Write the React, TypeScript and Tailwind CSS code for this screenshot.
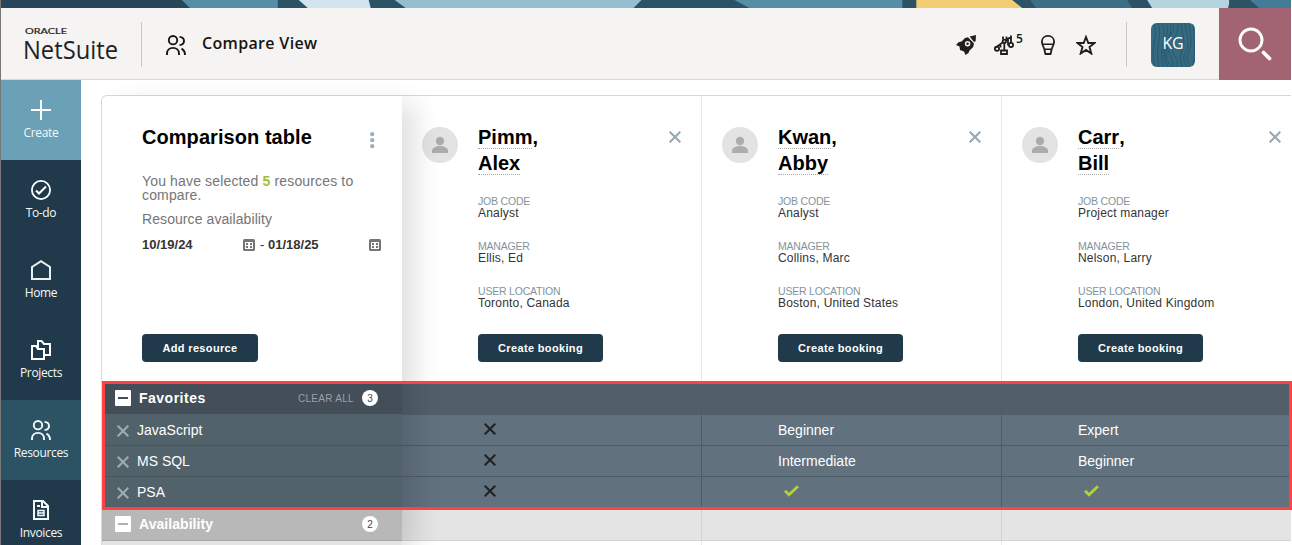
import React from 'react';

interface IconProps {
  className?: string;
}

interface Resource {
  last: string;
  first: string;
  jobCode: string;
  manager: string;
  location: string;
  skills: string[];
}

const resources: Resource[] = [
  { last: 'Pimm', first: 'Alex', jobCode: 'Analyst', manager: 'Ellis, Ed', location: 'Toronto, Canada', skills: ['no', 'no', 'no'] },
  { last: 'Kwan', first: 'Abby', jobCode: 'Analyst', manager: 'Collins, Marc', location: 'Boston, United States', skills: ['Beginner', 'Intermediate', 'yes'] },
  { last: 'Carr', first: 'Bill', jobCode: 'Project manager', manager: 'Nelson, Larry', location: 'London, United Kingdom', skills: ['Expert', 'Beginner', 'yes'] },
];

const PeopleIcon: React.FC<IconProps> = ({ className }) => (
  <svg className={className} width="20" height="20" viewBox="0 0 20 20" fill="none" stroke="currentColor" strokeWidth="1.9">
    <circle cx="7" cy="5.200" r="4.200" />
    <path d="M1 20v-1.500C1 15 3.500 12.900 7 12.900s6 2.100 6 5.600V20" />
    <path d="M13.500 1.900c2.700.3 4.500 1.700 4.500 4s-1.800 3.900-4.500 4.200M15.500 13.700c2.200 1.200 3.500 3.300 3.500 6.300" />
  </svg>
);

const CrossIcon: React.FC<IconProps> = ({ className }) => (
  <svg className={className} width="12" height="12" viewBox="0 0 12 12" stroke="currentColor" strokeWidth="2.100">
    <path d="M.7.7l10.600 10.600M11.300.7L.7 11.300" />
  </svg>
);

const CheckIcon = () => (
  <svg className="-mt-0.5 ml-1.5" width="15" height="12" viewBox="0 0 15 12" fill="none" stroke="#b2d235" strokeWidth="2.800">
    <path d="M1 5.800l4 4L14 1.200" />
  </svg>
);

const CalendarIcon = () => (
  <svg width="12" height="12" viewBox="0 0 12 12">
    <rect width="12" height="12" rx="1.500" fill="#757575" />
    <path d="M2 3h8v7H2z" fill="#fff" />
    <path d="M3 4h2v2H3zM7 4h2v2H7zM3 7h2v2H3zM7 7h2v2H7z" fill="#757575" />
  </svg>
);

const MinusBox = ({ color }: { color: string }) => (
  <svg width="16" height="16" viewBox="0 0 16 16">
    <rect width="16" height="16" rx="1" fill="#fff" />
    <path d="M3 8h10" stroke={color} strokeWidth="2" />
  </svg>
);

const navItems = [
  {
    label: 'Create',
    bg: 'bg-[#6aa1b7]',
    icon: <svg width="20" height="20" stroke="#fff" strokeWidth="2"><path d="M10 0v20M0 10h20" /></svg>,
  },
  {
    label: 'To-do',
    bg: 'bg-[#203a4b]',
    icon: (
      <svg width="20" height="20" fill="none" stroke="#fff" strokeWidth="1.800">
        <circle cx="10" cy="10" r="9.100" />
        <path d="M5 10.500l3 3 7-7" strokeWidth="2.100" />
      </svg>
    ),
  },
  {
    label: 'Home',
    bg: 'bg-[#203a4b]',
    icon: <svg width="20" height="20" fill="none" stroke="#e9f3f3" strokeWidth="2"><path d="M1 19V7l9-5.800L19 7v12z" /></svg>,
  },
  {
    label: 'Projects',
    bg: 'bg-[#203a4b]',
    icon: (
      <svg width="20" height="20" fill="none" stroke="#fff" strokeWidth="2">
        <path d="M1 6h4l2 3h6v10H1z" />
        <path d="M7 9V1h3.500l2.500 3h6v11h-6" />
      </svg>
    ),
  },
  { label: 'Resources', bg: 'bg-[#2c5364]', icon: <PeopleIcon className="text-[#f4fafa]" /> },
  {
    label: 'Invoices',
    bg: 'bg-[#203a4b]',
    icon: (
      <svg width="20" height="20" fill="none" stroke="#f4fafa" strokeWidth="2">
        <path d="M3 1h9l5 5v13H3z" />
        <path d="M11 1v6h6M6 6h3" />
        <path d="M7 10.500h6v5H7zM7 13h6" strokeWidth="1.500" />
      </svg>
    ),
  },
];

const Banner = () => (
  <svg className="block h-2 w-full" viewBox="0 0 1291 8" preserveAspectRatio="none">
    <rect width="1291" height="8" fill="#2b5365" />
    <rect width="190" height="8" fill="#28475b" />
    <path d="M181 0h96v8h-88z" fill="#568ea6" />
    <path d="M298 0h70l2 8h-63z" fill="#d0e5ee" />
    <path d="M394 0h247l-8 8H405z" fill="#95bfcf" />
    <path d="M734 0h168v8H749z" fill="#568ea6" />
    <path d="M916 0h96l10 8H916z" fill="#f4cc73" />
    <path d="M1030 0h97l5 8h-96z" fill="#3d6e85" />
    <path d="M1147 0h82v4l-1 4h-76z" fill="#b5d4e0" />
    <path d="M1250 0h41v8h-32z" fill="#437c97" />
  </svg>
);

const Header = () => (
  <header className="flex h-18 border-b border-[#d9d8d6] bg-[#f5f4f2] font-['Open_Sans',sans-serif] text-[#161513]">
    <svg className="mt-4 ml-5 shrink-0" width="110" height="44" fill="#222">
      <text x="4" y="10.200" fontSize="7.500" textLength="42" lengthAdjust="spacingAndGlyphs" fontFamily="Lato, sans-serif" stroke="#222" strokeWidth="0.200">ORACLE</text>
      <text x="2" y="35" fontSize="25.500" textLength="95" lengthAdjust="spacingAndGlyphs" fontFamily="'Open Sans', sans-serif">NetSuite</text>
    </svg>
    <div className="mt-3.5 ml-2.5 h-[45px] w-px bg-[#c9c8c6]" />
    <PeopleIcon className="mt-[27px] ml-6" />
    <h1 className="mt-[23px] ml-4 text-base leading-6 font-semibold tracking-[0.33px]">Compare View</h1>

    <div className="ml-auto flex">
      <svg className="mt-[27px]" width="21" height="20" viewBox="0 0 21 20" fill="#1f1e1c">
        <path d="M12 2.300l6 6.200-.8 3.500-3.700 3.500-1 2.500-3 2-1.500-3.500L4 15l-.5-3.500L0 10l2.500-2.700 3-.8L9 3z" />
        <path d="M13.700 1.400L20 0l-.4 6.300-1.600.7z" />
        <circle cx="11.600" cy="8.700" r="2" fill="none" stroke="#f5f4f2" strokeWidth="1.500" />
      </svg>
      <svg className="mt-[27px] ml-[17px]" width="21" height="20" viewBox="0 0 21 20" fill="none" stroke="#1f1e1c" strokeWidth="1.800">
        <circle cx="3" cy="13.700" r="2.100" />
        <circle cx="17" cy="9.900" r="2.100" />
        <circle cx="10.300" cy="6.300" r="1.700" />
        <path d="M7 15.500h6V19H7zM10.300 8v7.500M9 7.300L1 13M11.700 5.300L17 2M17 .5V8M12.500 1.500v3M14 4.500v6M6.500 9v3.500M9 4.500V1.500" />
      </svg>
      <span className="mt-[23px] ml-px w-2.5 text-[12px] leading-4 font-semibold">5</span>
      <svg className="mt-[27px] mr-px ml-[15px]" width="14" height="20" viewBox="0 0 14 20" fill="none" stroke="#1f1e1c" strokeWidth="1.800">
        <path d="M3.300 14.300C3 12 .9 10.500.9 6.800.9 3.300 3.500.9 7 .9s6.100 2.400 6.100 5.900c0 3.700-2.100 5.200-2.400 7.500L9.500 19h-5z" />
        <path d="M2 9.200h10M3.300 14.300h7.400" strokeWidth="1.400" />
      </svg>
      <svg className="mt-[27px] ml-5" width="20" height="20" viewBox="0 0 20 20" fill="none" stroke="#1f1e1c" strokeWidth="1.900">
        <path d="M10 2l2.300 6h6.100l-4.900 4 1.800 6.500L10 15l-5.300 3.500L6.500 12 1.600 8h6.100z" />
      </svg>
      <div className="mt-3.5 ml-[30px] h-[45px] w-px bg-[#c9c8c6]" />
      <div className="relative mt-[15px] ml-6 flex size-11 items-center justify-center overflow-hidden rounded-md bg-[#356a80] text-base text-white">
        <svg className="absolute inset-0" width="44" height="44" fill="none" stroke="#2b596d">
          <path d="M3 0c5 14-5 24 1 44M7 0c5 13-4 25 1 44M11 0c6 16-5 25 2 44M15 0c6 12-9 24 2 44M19 0c5 12-13 28 2 44M22 0c4 10-10 15-5 27s4 12 6 17M26 0c4 11-5 13-5 23s7 13 5 21M30 0c1 12 5 17 1 27s0 12 0 17M34 0c1 12 6 18 1 28s0 11 0 16M38 0c1 12 4 18 0 28s0 11 1 16M42 0c1 14 3 25 0 44" />
        </svg>
        <span className="relative -mt-1 tracking-[-0.3px]">KG</span>
      </div>
      <div className="ml-6 h-18 w-[72px] bg-[#a26372]">
        <svg width="72" height="72" fill="none" stroke="#fff" strokeLinecap="round">
          <circle cx="32" cy="32" r="11" strokeWidth="2.900" />
          <path d="M44.500 44.500l6 6" strokeWidth="3.800" />
        </svg>
      </div>
    </div>
  </header>
);

const Sidebar = () => (
  <nav className="w-20 shrink-0 font-['Open_Sans',sans-serif]">
    {navItems.map((item) => (
      <div key={item.label} className={`flex h-20 flex-col items-center pt-5 ${item.bg}`}>
        {item.icon}
        <span className="mt-1 text-[12px] leading-[18px] tracking-[-0.35px] text-[#f4f8f8]">{item.label}</span>
      </div>
    ))}
  </nav>
);

const DarkButton = ({ label, width }: { label: string; width: string }) => (
  <button className={`block h-7 rounded bg-[#203a4b] text-[11px] font-bold tracking-[0.35px] text-white ${width}`}>{label}</button>
);

const SummaryColumn = () => (
  <div className="relative z-10 w-[300px] shrink-0 rounded-tl-md bg-white shadow-[14px_8px_26px_rgba(0,0,0,0.12)]">
    <div className="flex h-72 flex-col items-start pl-10">
      <div className="mt-7 flex h-[26px] w-full">
        <h2 className="text-xl leading-[26px] font-bold tracking-[0.06px] text-black">Comparison table</h2>
        <svg className="mt-2 mr-[27px] ml-auto" width="5" height="18" fill="#9aaebb">
          <circle cx="2.200" cy="2.200" r="2.100" />
          <circle cx="2.200" cy="8.200" r="2.100" />
          <circle cx="2.200" cy="14.200" r="2.100" />
        </svg>
      </div>
      <p className="mt-6 w-[230px] text-sm leading-[14px] tracking-[0.15px] text-[#757575]">
        You have selected <b className="text-[#9fbf3b]">5</b> resources to compare.
      </p>
      <p className="mt-[10px] text-sm leading-[14px] tracking-[0.08px] text-[#757575]">Resource availability</p>
      <div className="mt-3 flex h-3.5 items-center text-[13px] font-bold text-[#333]">
        <span className="w-[101px]">10/19/24</span>
        <CalendarIcon />
        <span className="ml-[5px] w-1 font-normal">-</span>
        <span className="ml-1 w-[101px]">01/18/25</span>
        <CalendarIcon />
      </div>
      <div className="mt-[82px]">
        <DarkButton label="Add resource" width="w-[116px]" />
      </div>
    </div>

    <div className="flex h-[30px] items-center bg-[#434e58] pr-6 pb-0.5 pl-[13px] text-white">
      <MinusBox color="#434e58" />
      <span className="ml-2 text-sm font-bold tracking-[0.5px]">Favorites</span>
      <span className="mr-2 ml-auto text-[10px] tracking-[0.3px] text-[#a09fa6]">CLEAR ALL</span>
      <span className="flex size-4 items-center justify-center rounded-full bg-white text-[10px] text-[#444]">3</span>
    </div>
    <div className="bg-[#51626b] pt-px">
      {['JavaScript', 'MS SQL', 'PSA'].map((skill) => (
        <div key={skill} className="flex h-[31px] items-center border-b border-[#46555e] pl-[15px] text-sm text-white">
          <CrossIcon className="mt-0.5 text-[#a3abae]" />
          <span className="ml-2">{skill}</span>
        </div>
      ))}
    </div>
    <div className="flex h-[33px] items-center border-b border-[#a6a6a6] bg-[#b8b8b8] pr-6 pl-[13px] text-white">
      <MinusBox color="#b0b0b0" />
      <span className="ml-2 text-sm font-bold tracking-[0.05px]">Availability</span>
      <span className="ml-auto flex size-4 items-center justify-center rounded-full bg-white text-[10px] text-[#444]">2</span>
    </div>
    <div className="h-1 bg-[#e4e4e4]" />
  </div>
);

const Field = ({ label, value }: { label: string; value: string }) => (
  <div className="h-[45px]">
    <div className="h-3 text-[10.500px] leading-[11px] tracking-[-0.2px] text-[#84939b]">{label}</div>
    <div className="text-[12px] leading-[11px] tracking-[0.2px] text-[#333]">{value}</div>
  </div>
);

const SkillValue = ({ value }: { value: string }) => {
  if (value === 'no') return <CrossIcon className="-mt-0.5 ml-1.5 text-[#222]" />;
  if (value === 'yes') return <CheckIcon />;
  return <>{value}</>;
};

const ResourceColumn = ({ resource }: { resource: Resource }) => (
  <div className="w-[300px] shrink-0">
    <div className="flex h-[287px] border-r border-[#e8e8e8] pl-5">
      <svg className="mt-[31px] shrink-0" width="36" height="36">
        <circle cx="18" cy="18" r="18" fill="#e3e3e3" />
        <circle cx="18" cy="14" r="4.200" fill="#abadad" />
        <path d="M10 26v-2c0-3.200 4-5 8-5s8 1.800 8 5v2z" fill="#abadad" />
      </svg>
      <div className="mt-7 ml-5">
        <h3 className="mb-[19px] h-[53px] text-xl leading-[26px] font-bold text-black">
          <span className="inline-block h-[25px] border-b border-dotted border-[#aaa]">{resource.last}</span>,
          <br />
          <span className="inline-block h-[25px] border-b border-dotted border-[#aaa]">{resource.first}</span>
        </h3>
        <Field label="JOB CODE" value={resource.jobCode} />
        <Field label="MANAGER" value={resource.manager} />
        <Field label="USER LOCATION" value={resource.location} />
        <div className="pt-[3px]">
          <DarkButton label="Create booking" width="w-[125px]" />
        </div>
      </div>
      <CrossIcon className="mt-[35px] mr-5 ml-auto text-[#96a9b5]" />
    </div>
    <div className="h-8 border-r border-[#4e5d67] bg-[#525f69]" />
    {resource.skills.map((skill, i) => (
      <div key={i} className="flex h-[31px] items-center border-r border-b border-[#4d5d68] bg-[#61717e] pl-[76px] text-sm text-white">
        <SkillValue value={skill} />
      </div>
    ))}
    <div className="h-[33px] border-r border-b border-[#d3d3d3] bg-[#e4e4e4]" />
    <div className="h-1 border-r border-[#e8e8e8]" />
  </div>
);

const App: React.FC = () => {
  return (
    <div className="h-[545px] w-[1292px] overflow-hidden border-l border-l-[#777] bg-white pr-px font-['Liberation_Sans',Arial,sans-serif]">
      <Banner />
      <Header />
      <div className="flex h-[465px]">
        <Sidebar />
        <main className="relative min-w-0 flex-1 pt-[15px] pl-5">
          <div className="flex h-[450px] overflow-x-clip rounded-tl-md border-t border-l border-[#d8d8d8]">
            <SummaryColumn />
            {resources.map((resource) => (
              <ResourceColumn key={resource.last} resource={resource} />
            ))}
          </div>
          {/* highlight frame around the favorites group */}
          <div className="absolute top-[301px] -right-px left-[21px] z-20 h-[129px] border-3 border-[#ff4141]" />
        </main>
      </div>
    </div>
  );
};

export default App;
